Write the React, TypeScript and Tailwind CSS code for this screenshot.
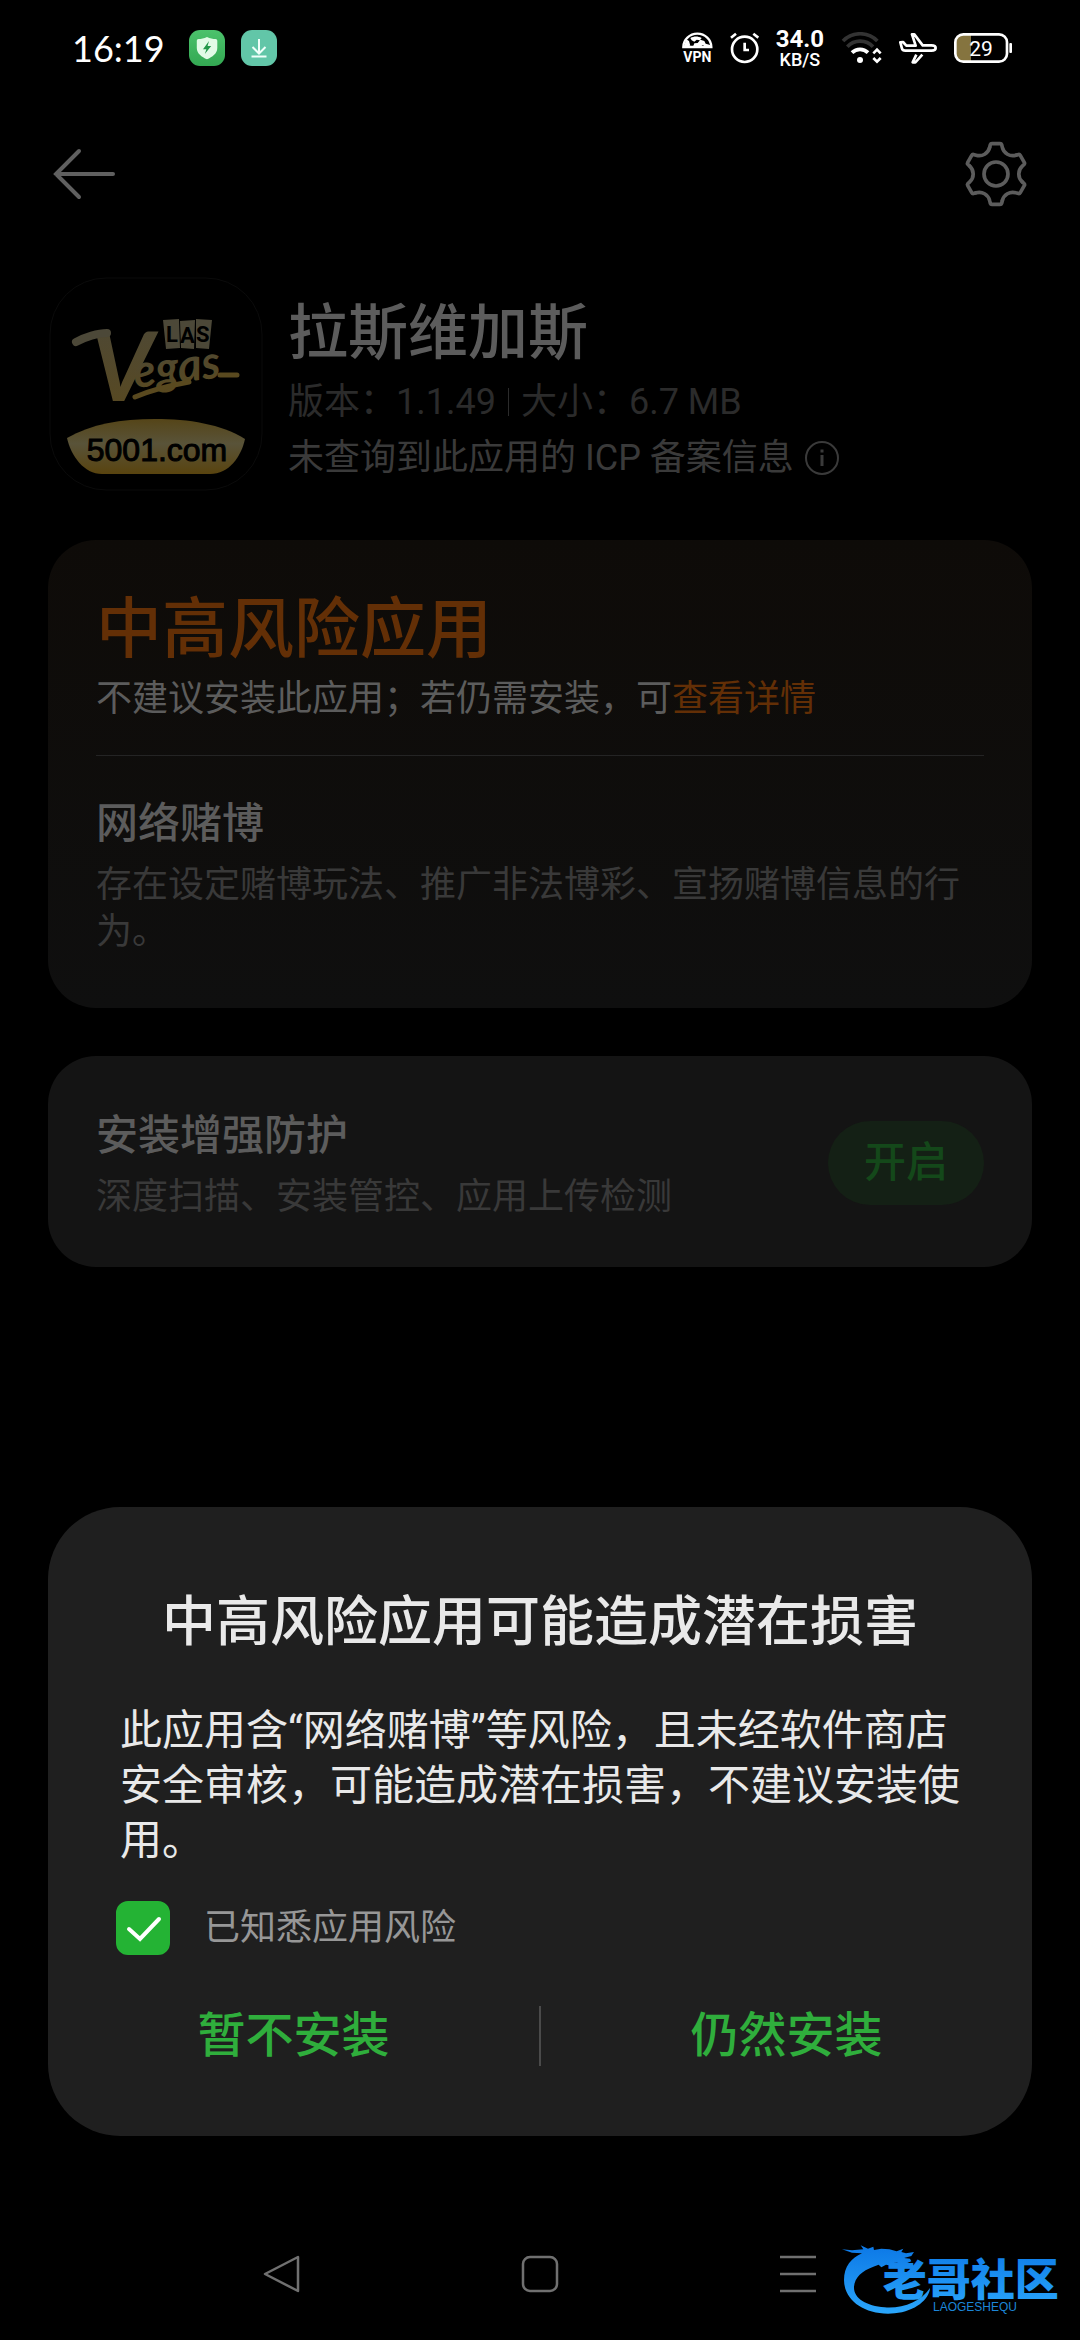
import { useState } from 'react';

const GEAR_ANGLES = [0, 60, 120, 180, 240, 300];

function StatusBar() {
  return (
    <header className="flex h-24 items-center justify-between pl-18 pr-17 text-white">
      <div className="flex items-center gap-4">
        <span className="mr-2 font-['Lato',sans-serif] text-[36px] leading-none">16:19</span>
        <svg className="size-9" viewBox="0 0 36 36" aria-hidden="true">
          <defs>
            <linearGradient id="shieldBg" x1="0" y1="0" x2="0" y2="1">
              <stop offset="0" stopColor="#4cc26c" />
              <stop offset="1" stopColor="#33a852" />
            </linearGradient>
          </defs>
          <rect width="36" height="36" rx="11" fill="url(#shieldBg)" />
          <path d="M18 7c3 1.600 6 2 8.500 2 1.200 0 1.800.8 1.800 2v7c0 5.500-5 9-10.300 11.300C12.700 27 7.800 23.500 7.800 18v-7c0-1.200.6-2 1.800-2C12 9 15 8.600 18 7z" fill="#e2fbe6" />
          <path d="M20 11l-6 8.200h3.400L15.800 24l6.400-8H18.600z" fill="#23984a" />
        </svg>
        <svg className="size-9" viewBox="0 0 36 36" fill="none" stroke="#f0fffa" strokeWidth="2" aria-hidden="true">
          <rect width="36" height="36" rx="11" fill="#62c6a8" stroke="none" />
          <path d="M18 9v14M11.500 17l6.500 6.500 6.500-6.500M10.500 26.500h15" />
        </svg>
      </div>

      <div className="flex items-center gap-[17px]">
        <svg className="h-8 w-[31px]" viewBox="71 66 93 96" aria-hidden="true">
          <path d="M75 111a42 40 0 0 1 84 0z" fill="none" stroke="#fff" strokeWidth="7" />
          <path d="M76 110l8-22 8 5 4 14zM96 84c12-6 22-6 34 0l-5 7-10-2-7 6-8-4zM104 110l4-10 10-1 8-10 12 4 4 8 14 4v6h-16l-6-6-8 5z" fill="#fff" />
          <text x="117" y="156" textAnchor="middle" fontFamily="Roboto, sans-serif" fontWeight="700" fontSize="42" fill="#fff">VPN</text>
        </svg>
        <svg className="h-8 w-[29px]" viewBox="205 68 87 96" fill="none" stroke="#fff" strokeWidth="8" aria-hidden="true">
          <circle cx="249" cy="120" r="38" />
          <path d="M249 100v22h13M208 85l15-12M275 73l15 12" />
        </svg>
        <div className="flex flex-col items-center font-['Roboto',sans-serif]">
          <span className="text-[24px] font-bold leading-6">34.0</span>
          <span className="text-[18px] font-medium leading-[18px]">KB/S</span>
        </div>
        <svg className="h-8 w-[41px]" viewBox="543 66 123 96" fill="none" strokeWidth="11" aria-hidden="true">
          <path d="M549 93a72 72 0 0 1 103 0" stroke="#333" />
          <path d="M562 110a53 53 0 0 1 77 0" stroke="#333" />
          <path d="M576 128a34 34 0 0 1 48 0" stroke="#fff" />
          <circle cx="600" cy="150" r="9" fill="#fff" />
          <path d="M640 130l11-11 11 11M640 144l11 11 11-11" stroke="#fff" strokeWidth="8" />
        </svg>
        <svg className="h-8 w-[38px]" viewBox="711 66 114 96" fill="none" stroke="#fff" strokeWidth="8" strokeLinejoin="round" aria-hidden="true">
          <path d="M715 97l8-1 10 11h28l-11-34h7l25 33h26c8 0 13 3 13 8s-5 8-13 8h-78c-6 0-9-2-10-6z" />
          <path d="M763 134l-11 23h8l21-23" />
        </svg>
        <svg className="h-8 w-[58px]" viewBox="879 66 174 96" aria-hidden="true">
          <path d="M904 74h26v80h-26a20 20 0 0 1-20-20V94a20 20 0 0 1 20-20z" fill="#85743f" />
          <rect x="883" y="73" width="155" height="82" rx="24" fill="none" stroke="#fff" strokeWidth="8" />
          <rect x="1045" y="99" width="8" height="30" rx="3" fill="#fff" />
          <text x="960" y="137" textAnchor="middle" fontFamily="Roboto, sans-serif" fontSize="63" fill="#fff">29</text>
        </svg>
      </div>
    </header>
  );
}

function AppIcon() {
  return (
    <svg className="size-54 shrink-0" viewBox="0 0 216 216" role="img" aria-label="Las Vegas 5001.com">
      <defs>
        <linearGradient id="script" x1="0" y1="0" x2="0" y2="1">
          <stop offset="0" stopColor="#4c4838" />
          <stop offset="1" stopColor="#59491f" />
        </linearGradient>
        <linearGradient id="bowl" x1="0" y1="0" x2="0" y2="1">
          <stop offset="0" stopColor="#554518" />
          <stop offset="0.450" stopColor="#595339" />
          <stop offset="1" stopColor="#59440f" />
        </linearGradient>
      </defs>
      <rect x="2" y="2" width="212" height="212" rx="56" fill="#000" stroke="#0b0b0b" strokeWidth="1" />
      <path d="M115 44l16-1 1 29-14 1zM132 45l15-1-1 29-13-1zM148 43l16 1-3 29-13-1z" fill="#4c4838" />
      <g fontFamily="Roboto, sans-serif" fontWeight="700" fontSize="22" fill="#000">
        <text x="118" y="66">L</text>
        <text x="132" y="67">A</text>
        <text x="148" y="66">S</text>
      </g>
      <g fill="url(#script)" fontFamily="Lato, sans-serif" fontStyle="italic">
        <text x="43" y="125" fontSize="96" fontWeight="700">V</text>
        <text x="87" y="112" fontSize="46" fontWeight="700" transform="rotate(-7 87 112)">egas</text>
      </g>
      <path d="M28 66c9-5 22-9 31-9" fill="none" stroke="#4c4838" strokeWidth="8" strokeLinecap="round" />
      <path d="M87 121c16-7 32-11 54-15M172 99h17" fill="none" stroke="#59491f" strokeWidth="5" strokeLinecap="round" />
      <path d="M19 162c24-14 54-19 88-19s66 5 90 20c-4 18-16 35-35 35H54c-18 0-31-18-35-36z" fill="url(#bowl)" />
      <text x="109" y="185" textAnchor="middle" fontFamily="'Liberation Sans', sans-serif" fontSize="32" fill="#000" stroke="#000" strokeWidth="1">5001.com</text>
    </svg>
  );
}

function Watermark() {
  return (
    <svg className="absolute bottom-0 right-0 h-30 w-65" viewBox="0 0 780 360" role="img" aria-label="老哥社区">
      <defs>
        <linearGradient id="blue" x1="0" y1="0" x2="0" y2="1">
          <stop offset="0" stopColor="#0c78e6" />
          <stop offset="1" stopColor="#2aa6fb" />
        </linearGradient>
      </defs>
      <path
        d="M66 88l30 3 34-3-8-12 22 10 16-6 2 10 22-4 24 2 22 6 20-8-6 10 14 4 24-4-8 12-22 6 18 2 4 8-14 6-30-2-20 2 10 8-22-4-14 8-8-8-16 6c-34 12-56 32-58 60-2 34 36 58 92 62 54 4 108-16 136-58-2 34-44 70-106 76-88 8-152-38-152-100 0-40 22-66 54-80l-30-2z"
        fill="url(#blue)"
      />
      <text x="188" y="228" fontFamily="'Noto Sans CJK SC', sans-serif" fontWeight="900" fontSize="132" fill="url(#blue)">老哥社区</text>
      <text x="339" y="274" fontFamily="'Liberation Sans', sans-serif" fontSize="36" fill="#1c86d8">LAOGESHEQU</text>
    </svg>
  );
}

export default function App() {
  const [agreed, setAgreed] = useState(true);

  return (
    <div className="relative flex min-h-screen flex-col bg-black font-['Roboto','Noto_Sans_CJK_SC',sans-serif]">
      <StatusBar />

      <nav className="flex h-39 items-center justify-between px-12">
        <button type="button" aria-label="返回" className="size-18">
          <svg className="size-18" viewBox="0 0 72 72" fill="none" stroke="#606060" strokeWidth="4" strokeLinecap="round">
            <path d="M65 36H8M31 13L8 36l23 23" />
          </svg>
        </button>
        <button type="button" aria-label="设置" className="size-18">
          <svg className="size-18" viewBox="-108 -108 216 216" fill="none" stroke="#5c5c5c" strokeWidth="11" strokeLinecap="round">
            <circle r="36" />
            {GEAR_ANGLES.map((angle) => (
              <path
                key={angle}
                transform={`rotate(${angle})`}
                d="M-19 -80L-17 -88Q-16 -91 -12 -91H12Q16 -91 17 -88L19 -80A32 32 0 0 0 60 -56.500"
              />
            ))}
          </svg>
        </button>
      </nav>

      <main className="px-12 pt-6">
        <section className="flex gap-6">
          <AppIcon />
          <div className="flex flex-col pt-5.5 text-[36px] leading-14">
            <h1 className="mb-1 text-[60px] font-medium leading-18 text-[#5c5c5c]">拉斯维加斯</h1>
            <p className="flex items-center text-[#2b2b2b]">
              版本：1.1.49
              <span className="mx-3 h-7 w-px bg-[#2b2b2b]" />
              大小：6.7 MB
            </p>
            <p className="flex items-center gap-2.5 text-[#3a3a3a]">
              未查询到此应用的 ICP 备案信息
              <svg className="size-9" viewBox="0 0 36 36" fill="none" stroke="#3a3a3a" strokeWidth="2" aria-hidden="true">
                <circle cx="18" cy="18" r="16" />
                <path d="M18 15v11M18 9.500v3" strokeWidth="3" />
              </svg>
            </p>
          </div>
        </section>

        <section className="mt-12 rounded-[48px] bg-linear-to-b from-[#0e0b08] to-[#0f0f0f] px-12 pb-13 pt-13">
          <h2 className="text-[66px] font-medium leading-19 text-[#632f06]">中高风险应用</h2>
          <p className="mt-2 text-[36px] leading-[47px] text-[#5c5c5c]">
            不建议安装此应用；若仍需安装，可
            <a href="#detail" className="text-[#632f06]">查看详情</a>
          </p>
          <hr className="mb-9 mt-8 border-[#242424]" />
          <h3 className="text-[42px] font-medium leading-16 text-[#5c5c5c]">网络赌博</h3>
          <p className="mt-1.5 text-[36px] leading-[47px] text-[#393939]">
            存在设定赌博玩法、推广非法博彩、宣扬赌博信息的行为。
          </p>
        </section>

        <section className="mt-12 flex items-center justify-between rounded-[48px] bg-[#141414] px-12 pb-11.5 pt-12">
          <div>
            <h3 className="text-[42px] font-medium leading-16 text-[#5c5c5c]">安装增强防护</h3>
            <p className="mt-1.5 text-[36px] leading-[47px] text-[#393939]">深度扫描、安装管控、应用上传检测</p>
          </div>
          <button type="button" className="rounded-full bg-[#142015] px-9 text-[42px] font-medium leading-21 text-[#14481a]">
            开启
          </button>
        </section>
      </main>

      <section role="dialog" aria-labelledby="risk-title" className="mx-12 mb-18 mt-auto rounded-[72px] bg-[#1f1f1f] pb-15 pt-19">
        <h2 id="risk-title" className="text-center text-[54px] font-medium leading-20 text-[#e9e9e9]">
          中高风险应用可能造成潜在损害
        </h2>
        <p className="mt-10 px-18 text-[42px] leading-[55px] text-[#e9e9e9]">
          此应用含“网络赌博”等风险，且未经软件商店安全审核，可能造成潜在损害，不建议安装使用。
        </p>
        <label className="mt-8 flex items-center gap-8.5 px-17 text-[36px] leading-14 text-[#979797]">
          <span className="relative size-13.5">
            <input
              type="checkbox"
              checked={agreed}
              onChange={(e) => setAgreed(e.target.checked)}
              className="block size-13.5 appearance-none rounded-xl border-2 border-[#24b334] checked:bg-[#24b334]"
            />
            {agreed && (
              <svg className="pointer-events-none absolute inset-0 size-13.5" viewBox="0 0 54 54" fill="none" stroke="#fff" strokeWidth="4" strokeLinecap="round">
                <path d="M13 28l11 10 19-20" />
              </svg>
            )}
          </span>
          已知悉应用风险
        </label>
        <div className="mt-10 flex items-center text-[48px] font-medium leading-20 text-[#2fae3c]">
          <button type="button" className="flex-1">暂不安装</button>
          <span className="h-15 w-0.5 bg-[#4a4a4a]" />
          <button type="button" className="flex-1">仍然安装</button>
        </div>
      </section>

      <footer className="flex h-33 items-center justify-center gap-[186px]">
        <button type="button" aria-label="后退" className="size-18">
          <svg className="size-18" viewBox="0 0 72 72" fill="none" stroke="#707070" strokeWidth="2.500" strokeLinejoin="round">
            <path d="M52 19v34L19 36z" />
          </svg>
        </button>
        <button type="button" aria-label="主页" className="size-18">
          <svg className="size-18" viewBox="0 0 72 72" fill="none" stroke="#707070" strokeWidth="2.500">
            <rect x="19" y="19" width="34" height="34" rx="7" />
          </svg>
        </button>
        <button type="button" aria-label="最近任务" className="size-18">
          <svg className="size-18" viewBox="0 0 72 72" fill="none" stroke="#707070" strokeWidth="2.500">
            <path d="M18 19h36M18 36h36M18 53h36" />
          </svg>
        </button>
      </footer>

      <Watermark />
    </div>
  );
}
